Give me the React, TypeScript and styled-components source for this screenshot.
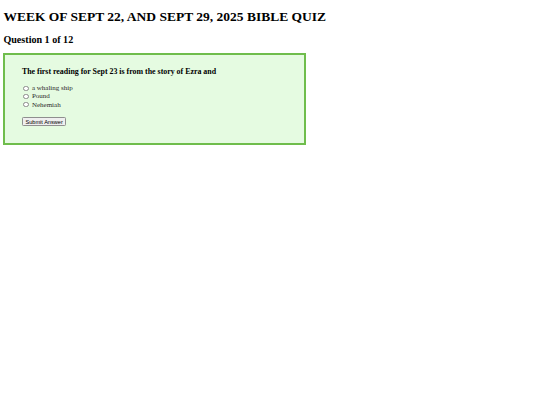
import React from "react";
import styled, { createGlobalStyle } from "styled-components";

const Global = createGlobalStyle`
  html, body { background: #ffffff; }
  body {
    margin: 3.4px;
    font-family: "Liberation Serif", "Times New Roman", serif;
    font-size: 6.75px;
    color: #000;
  }
`;

const Title = styled.h1`
  font-size: 13.5px;
  font-weight: bold;
  margin: 6px 0 9px 0;
  line-height: 15.5px;
`;

const Counter = styled.h2`
  font-size: 10.1px;
  font-weight: bold;
  margin: 8.4px 0 7.4px 0;
  line-height: 11.6px;
`;

const QuizBox = styled.div`
  width: 302.6px;
  box-sizing: border-box;
  border: 2px solid #6fbd4c;
  background: #e5fbe1;
  padding: 12.5px 17px 17px 16.5px;
`;

const QuestionText = styled.h3`
  font-size: 7.9px;
  font-weight: bold;
  margin: 0 0 7.9px 0;
  line-height: 9.1px;
`;

const Options = styled.div`
  display: flex;
  flex-direction: column;
`;

const OptionRow = styled.label`
  display: flex;
  align-items: center;
  font-size: 7px;
  line-height: 8.1px;
  height: 8.1px;
  color: #2a2a2a;
`;

const Radio = styled.input`
  appearance: none;
  width: 5.6px;
  height: 5.6px;
  margin: 0 2.8px 0 1.6px;
  border-radius: 50%;
  border: 0.7px solid #8a8a8a;
  background: #ffffff;
  box-sizing: border-box;
  &:checked {
    background: radial-gradient(circle, #1a73e8 40%, #ffffff 45%);
  }
`;

const SubmitButton = styled.button`
  margin-top: 8.5px;
  font-family: "Liberation Sans", Arial, sans-serif;
  font-size: 5.6px;
  padding: 0.4px 2.6px;
  border: 0.8px solid #8f8f8f;
  border-radius: 1.3px;
  background: #efefef;
  color: #000;
  line-height: 6.5px;
`;

const options = ["a whaling ship", "Pound", "Nehemiah"];

export default function App() {
  return (
    <>
      <Global />
      <Title>WEEK OF SEPT 22, AND SEPT 29, 2025 BIBLE QUIZ</Title>
      <Counter>Question 1 of 12</Counter>
      <QuizBox>
        <QuestionText>The first reading for Sept 23 is from the story of Ezra and</QuestionText>
        <Options>
          {options.map((o) => (
            <OptionRow key={o}>
              <Radio type="radio" name="answer" value={o} />
              {o}
            </OptionRow>
          ))}
        </Options>
        <SubmitButton type="button">Submit Answer</SubmitButton>
      </QuizBox>
    </>
  );
}
